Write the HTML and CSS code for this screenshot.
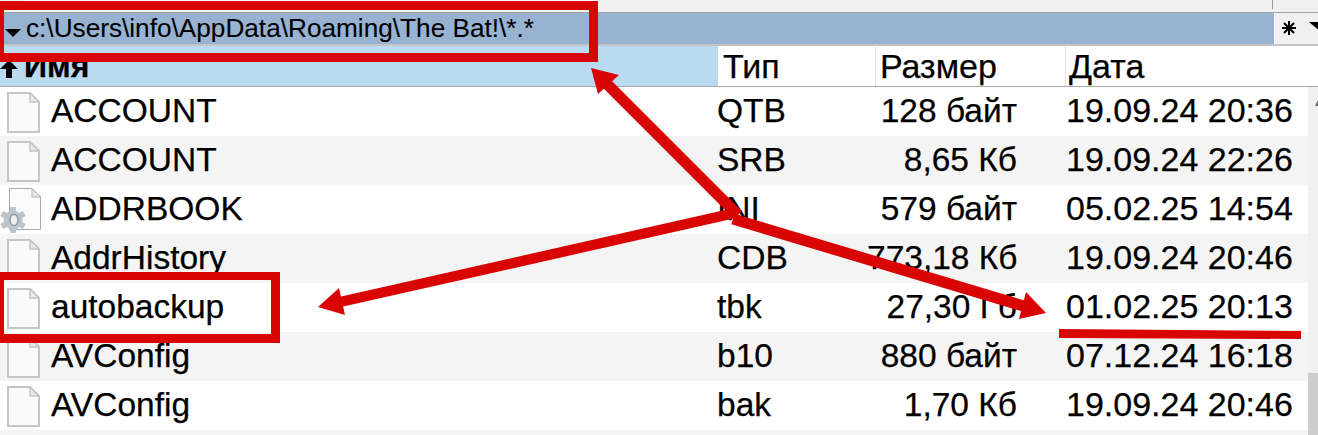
FILE: index.html
```html
<!DOCTYPE html>
<html lang="ru">
<head>
<meta charset="utf-8">
<title>The Bat! files</title>
<link rel="stylesheet" href="styles.css">
</head>
<body>
<svg class="defs" width="0" height="0" aria-hidden="true">
  <symbol id="doc" viewBox="0 0 33 41">
    <path d="M1 1H23L32 10V40H1Z" fill="#fafafa" stroke="#c6c6c6" stroke-width="2"/>
    <path d="M23 1V10H32Z" fill="#e9e9e9" stroke="#c6c6c6" stroke-width="1.5"/>
  </symbol>
</svg>
<div class="page">
  <div class="topstrip"></div>
  <div class="pathrow">
    <div class="pathbar">
      <svg class="caret" viewBox="0 0 16 8"><path d="M0 0H16L8 8Z"/></svg>
      <span>c:\Users\info\AppData\Roaming\The Bat!\*.*</span>
    </div>
    <div class="pathtools">
      <span class="star">
        <svg viewBox="0 0 14 14"><path d="M7 0V14M0 7H14M2 2L12 12M12 2L2 12" stroke="#000" stroke-width="2"/></svg>
      </span>
      <svg class="drop" viewBox="0 0 12 10"><path d="M0 0H12V10Z"/></svg>
    </div>
  </div>
  <div class="head">
    <div class="hname">
      <svg class="up" viewBox="0 0 18 18"><path d="M9 0L18 9H12V18H6V9H0Z"/></svg>
      <span>Имя</span>
    </div>
    <div class="htype">Тип</div>
    <div class="hsize">Размер</div>
    <div class="hdate">Дата</div>
  </div>
  <div class="body">
    <div class="rows">
      <div class="row">
        <div class="name"><svg class="ficon"><use href="#doc"/></svg>ACCOUNT</div>
        <div>QTB</div><div class="size">128 байт</div><div class="date">19.09.24 20:36</div>
      </div>
      <div class="row alt">
        <div class="name"><svg class="ficon"><use href="#doc"/></svg>ACCOUNT</div>
        <div>SRB</div><div class="size">8,65 Кб</div><div class="date">19.09.24 22:26</div>
      </div>
      <div class="row">
        <div class="name">
          <svg class="ficon cfg" viewBox="0 0 41 46">
            <path d="M9.5 .5H32L40.500 9V41.500H9.5Z" fill="#fbfbfb" stroke="#a9a9a9"/>
            <path d="M32 .5V9H40.500Z" fill="#e6e6e6" stroke="#b5b5b5"/>
            <g transform="translate(13 32)">
              <g fill="#bcc4cc">
                <circle r="9.500"/>
                <rect x="-3" y="-13" width="6" height="26"/>
                <rect x="-3" y="-13" width="6" height="26" transform="rotate(60)"/>
                <rect x="-3" y="-13" width="6" height="26" transform="rotate(120)"/>
              </g>
              <ellipse cx="1" cy="0" rx="4" ry="5.500" fill="#eef1f3" stroke="#8f989f" stroke-width="1.500"/>
            </g>
          </svg>ADDRBOOK</div>
        <div>INI</div><div class="size">579 байт</div><div class="date">05.02.25 14:54</div>
      </div>
      <div class="row alt">
        <div class="name"><svg class="ficon"><use href="#doc"/></svg>AddrHistory</div>
        <div>CDB</div><div class="size">773,18 Кб</div><div class="date">19.09.24 20:46</div>
      </div>
      <div class="row">
        <div class="name"><svg class="ficon"><use href="#doc"/></svg>autobackup</div>
        <div>tbk</div><div class="size">27,30 Гб</div><div class="date">01.02.25 20:13</div>
      </div>
      <div class="row alt">
        <div class="name"><svg class="ficon"><use href="#doc"/></svg>AVConfig</div>
        <div>b10</div><div class="size">880 байт</div><div class="date">07.12.24 16:18</div>
      </div>
      <div class="row">
        <div class="name"><svg class="ficon"><use href="#doc"/></svg>AVConfig</div>
        <div>bak</div><div class="size">1,70 Кб</div><div class="date">19.09.24 20:46</div>
      </div>
      <div class="row alt"></div>
    </div>
    <div class="scrollbar">
      <svg class="scrollup" viewBox="0 0 3 6"><path d="M3 0V6H0Z"/></svg>
      <div class="thumb"></div>
    </div>
  </div>
  <svg class="marks" viewBox="0 0 1318 435" aria-hidden="true">
    <g fill="#d90505">
      <path fill-rule="evenodd" d="M0 1H598V62H0ZM4 10V53H589V10Z"/>
      <path fill-rule="evenodd" d="M0 272H280V343H0ZM4 280V334H271V280Z"/>
      <path d="M591 68L619 75L598 94Z"/>
      <path d="M610.900 80.100L741.900 211.100L734.100 218.900L603.100 87.900Z"/>
      <path d="M318 307L339 288L345 315Z"/>
      <path d="M338.900 297L733.900 208L736.100 218L341.100 307Z"/>
      <path d="M1046 313L1026 292L1019 319Z"/>
      <path d="M734.600 213.700L1031.600 302.700L1028.400 313.300L731.400 224.300Z"/>
      <path d="M1059 329L1301 331V339L1059 338Z"/>
    </g>
  </svg>
</div>
</body>
</html>
```
FILE: styles.css
```css
html, body {
  margin: 0;
  padding: 0;
  overflow: hidden;
  background: #fff;
}
.defs {
  position: absolute;
}
.page {
  position: relative;
  width: 1318px;
  height: 435px;
  overflow: hidden;
  font-family: "Liberation Sans", Arial, sans-serif;
  font-size: 33.5px;
  color: #000;
  -webkit-text-stroke: 0.25px #000;
}
.topstrip {
  position: relative;
  height: 12px;
  background: #f0f0f0;
  border-bottom: 1px solid #a4a4a4;
}
.topstrip::before {
  content: "";
  position: absolute;
  left: 24px;
  top: 0;
  width: 574px;
  height: 1px;
  background: #fff;
}
.topstrip::after {
  content: "";
  position: absolute;
  left: 1272px;
  top: 0;
  width: 1px;
  height: 9px;
  background: #999;
}
.pathrow {
  display: flex;
  height: 31px;
  background: #f0f0f0;
  border-bottom: 2px solid #c4c4c4;
}
.pathbar {
  width: 1275px;
  flex: none;
  background: #98b3d1;
  border-right: 1px solid #fff;
  display: flex;
  align-items: center;
  font-size: 26.200px;
  box-sizing: border-box;
  padding-left: 5px;
  gap: 5px;
  -webkit-text-stroke: 0.1px #000;
}
.caret {
  width: 16px;
  height: 8px;
  margin-top: 8px;
}
.pathtools {
  flex: 1;
  min-width: 0;
  overflow: hidden;
  display: flex;
  align-items: flex-start;
  padding-left: 7px;
}
.star {
  display: block;
  flex: none;
  width: 14px;
  height: 14px;
  margin-top: 8px;
}
.star svg {
  display: block;
}
.drop {
  width: 12px;
  height: 10px;
  margin: 9px 0 0 13px;
  flex: none;
}
.head {
  display: grid;
  grid-template-columns: 718px 157px 190px 1fr;
  height: 40px;
  border-bottom: 1px solid #a8a8a8;
  line-height: 40px;
  font-size: 34px;
}
.hname {
  background: #badaf2;
  display: flex;
  align-items: flex-start;
  padding-left: 0;
  gap: 6px;
  font-weight: bold;
  font-size: 32px;
  line-height: 36px;
}
.hname span {
  margin-top: 2px;
}
.up {
  width: 18px;
  height: 18px;
  flex: none;
  margin-top: 14px;
}
.htype {
  padding-left: 5px;
}
.hsize {
  padding-left: 4px;
  border-left: 1px solid #e4e4e4;
}
.hdate {
  padding-left: 3px;
  border-left: 1px solid #e4e4e4;
}
.body {
  display: flex;
  background: #f0f0f0;
}
.rows {
  width: 1308px;
  flex: none;
}
.row {
  display: grid;
  grid-template-columns: 717px 150px 150px 1fr;
  height: 49px;
  line-height: 47px;
  background: #fff;
  white-space: nowrap;
}
.row.alt {
  background: #f4f4f4;
}
.name {
  display: flex;
  align-items: flex-start;
  padding-left: 7px;
}
.ficon {
  width: 33px;
  height: 41px;
  margin: 5px 11px 0 0;
  flex: none;
}
.ficon.cfg {
  width: 41px;
  height: 46px;
  margin: 3px 10px 0 -7px;
}
.size {
  text-align: right;
}
.date {
  padding-left: 49px;
  font-size: 34px;
}
.scrollbar {
  flex: 1;
  position: relative;
}
.scrollup {
  position: absolute;
  left: 7px;
  top: 13px;
  width: 3px;
  height: 6px;
  fill: #666;
}
.thumb {
  position: absolute;
  left: 0;
  right: 0;
  top: 286px;
  height: 80px;
  background: #cdcdcd;
}
.marks {
  position: absolute;
  left: 0;
  top: 0;
  width: 1318px;
  height: 435px;
}
```
